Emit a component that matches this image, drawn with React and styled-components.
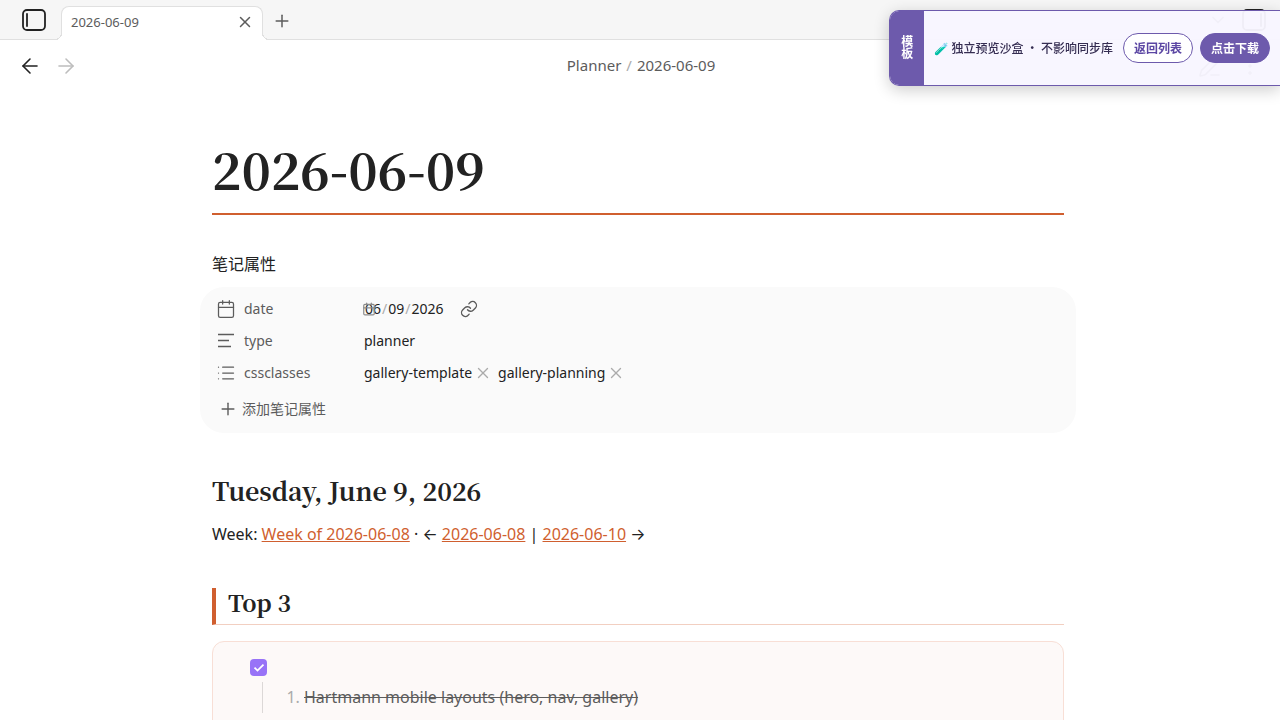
import { useState } from 'react';
import styled, { createGlobalStyle } from 'styled-components';
import { ArrowLeft, ArrowRight, Calendar, ChevronDown, Link, List, MoreVertical, PenLine, Plus, X } from 'lucide-react';

const sans = `'Noto Sans', Inter, 'Noto Sans CJK SC', sans-serif`;
const serif = `'Noto Serif CJK SC', 'Noto Serif', 'Liberation Serif', serif`;

const GlobalStyle = createGlobalStyle`
  * {
    box-sizing: border-box;
  }

  body {
    margin: 0;
    background: #ffffff;
    color: #222222;
    font-family: ${sans};
    font-size: 16px;
    line-height: 24px;
  }

  button {
    border: none;
    padding: 0;
    background: none;
    font-family: inherit;
    color: inherit;
    cursor: pointer;
  }
`;

const Workspace = styled.div`
  display: flex;
  flex-direction: column;
  height: 100vh;
  overflow: hidden;
`;

const TabBar = styled.header`
  display: flex;
  align-items: flex-end;
  height: 40px;
  padding: 0 14px 0 22px;
  background: #f6f6f6;
  box-shadow: inset 0 -1px 0 #e0e0e0;
`;

const IconButton = styled.button`
  display: flex;
  align-items: center;
  justify-content: center;
  flex-shrink: 0;
  color: ${props => props.$color || '#5c5c5c'};
`;

const SidebarButton = styled(IconButton)`
  height: 40px;
`;

const Tab = styled.div`
  position: relative;
  display: flex;
  align-items: center;
  justify-content: space-between;
  width: 202px;
  height: 34px;
  margin-left: 15px;
  padding: 0 8px 3px 9px;
  border: 1px solid #e0e0e0;
  border-bottom: none;
  border-radius: 8px 8px 0 0;
  background: #ffffff;
  color: #5c5c5c;
  font-size: 13px;

  /* curved feet that join the tab to the bar's bottom line */
  &::before,
  &::after {
    content: '';
    position: absolute;
    bottom: 0;
    width: 7px;
    height: 7px;
  }

  &::before {
    left: -7px;
    background: radial-gradient(circle at 0 0, #f6f6f6 6px, #e0e0e0 6px, #e0e0e0 7px, #ffffff 7px);
  }

  &::after {
    right: -7px;
    background: radial-gradient(circle at 100% 0, #f6f6f6 6px, #e0e0e0 6px, #e0e0e0 7px, #ffffff 7px);
  }
`;

const NewTabButton = styled(IconButton)`
  height: 38px;
  margin-left: 9px;
`;

const TabBarEnd = styled.div`
  display: flex;
  align-items: center;
  gap: 14px;
  height: 40px;
  margin-left: auto;
`;

const ViewHeader = styled.div`
  display: grid;
  grid-template-columns: 1fr auto 1fr;
  align-items: center;
  flex-shrink: 0;
  height: 52px;
  padding: 0 18px;
`;

const HeaderGroup = styled.div`
  display: flex;
  align-items: center;
  justify-content: ${props => (props.$end ? 'flex-end' : 'flex-start')};
  gap: ${props => (props.$end ? '16px' : '12px')};
`;

const Breadcrumb = styled.nav`
  display: flex;
  gap: 5px;
  padding: 0 0 2px 2px;
  color: #5c5c5c;
  font-size: 15px;

  a {
    color: inherit;
    text-decoration: none;
  }

  span {
    color: #ababab;
  }
`;

const Scroller = styled.main`
  flex: 1;
  min-height: 0;
  padding: 36px 28px 0 24px;
  overflow: hidden;
`;

const Note = styled.article`
  max-width: 852px;
  margin: 0 auto;
`;

const Title = styled.h1`
  margin: 0;
  padding: 6px 0 10px;
  border-bottom: 2px solid #d05f2f;
  font-family: ${serif};
  font-size: 50px;
  font-weight: 700;
  line-height: 69px;
`;

const PropertiesHeading = styled.h2`
  margin: 37px 0 11px;
  font-size: 16px;
  font-weight: 400;
  line-height: 24px;
`;

const Properties = styled.section`
  margin: 0 -12px;
  padding: 6px 16px 8px;
  border-radius: 24px;
  background: #fafafa;
  font-size: 14px;
`;

const Property = styled.div`
  display: flex;
  align-items: center;
  height: 32px;
`;

const PropertyName = styled.label`
  display: flex;
  align-items: center;
  gap: 8px;
  width: 148px;
  color: #5c5c5c;
`;

const DateField = styled.div`
  position: relative;
  display: flex;
  align-items: center;
  gap: 12px;

  > svg {
    position: absolute;
    left: -2px;
    color: #8a8a8a;
  }
`;

const DateInput = styled.input`
  width: 84px;
  height: 20px;
  padding: 0;
  border: none;
  background: none;
  color: #222222;
  font-family: inherit;
  font-size: 14px;
  line-height: 18px;

  &::-webkit-datetime-edit-fields-wrapper,
  &::-webkit-datetime-edit {
    padding: 0;
  }

  &::-webkit-datetime-edit-text {
    padding: 0;
    color: #ababab;
  }

  &::-webkit-calendar-picker-indicator {
    display: none;
  }
`;

const TextInput = styled.input`
  flex: 1;
  height: 24px;
  padding: 0 0 2px;
  border: none;
  background: none;
  color: #222222;
  font-family: inherit;
  font-size: 14px;
`;

const Pills = styled.div`
  display: flex;
  gap: 6px;
`;

const Pill = styled.span`
  display: flex;
  align-items: center;
  gap: 2px;
`;

const AddProperty = styled.button`
  display: flex;
  align-items: center;
  gap: 4px;
  height: 32px;
  margin-top: 4px;
  padding: 0 2px;
  color: #5c5c5c;
  font-size: 14px;
  line-height: 20px;
`;

const DateHeading = styled.h2`
  margin: 37px 0 12px;
  font-family: ${serif};
  font-size: 25px;
  font-weight: 700;
  line-height: 40px;
`;

const Paragraph = styled.p`
  margin: 0;
`;

const NoteLink = styled.a`
  color: #d05f2f;
  text-decoration: underline;
`;

const SectionHeading = styled.h3`
  margin: 42px 0 16px;
  padding: 0 0 6px 12px;
  border-bottom: 1px solid #f2cfc1;
  border-left: 4px solid #d05f2f;
  font-family: ${serif};
  font-size: 23px;
  font-weight: 700;
  line-height: 30px;
`;

const TaskCard = styled.div`
  min-height: 160px;
  padding: 17px 37px;
  border: 1px solid #f8dfd6;
  border-radius: 12px;
  background: #fdf9f8;
`;

const Checkbox = styled.input`
  display: block;
  appearance: none;
  width: 17px;
  height: 17px;
  margin: 0;
  border-radius: 4px;
  background: #9873f7;
`;

const CheckWrap = styled.span`
  display: block;
  position: relative;
  width: 17px;

  svg {
    position: absolute;
    inset: 0;
    pointer-events: none;
  }
`;

const TaskList = styled.ol`
  margin: 6px 0 0 12px;
  padding: 3px 0 4px 41px;
  border-left: 1px solid #dcd8d7;
  color: #5c5c5c;

  li::marker {
    color: #ababab;
  }
`;

const Banner = styled.aside`
  position: fixed;
  top: 10px;
  right: 0;
  display: flex;
  height: 76px;
  border: 1px solid #6d5aac;
  border-right: none;
  border-radius: 10px 0 0 10px;
  overflow: hidden;
  background: rgba(248, 246, 255, 0.96);
  box-shadow: 0 4px 16px rgba(0, 0, 0, 0.2);
  font-family: 'Noto Sans CJK SC', sans-serif;
  font-size: 12px;
`;

const BannerTag = styled.div`
  display: flex;
  align-items: center;
  justify-content: center;
  width: 34px;
  padding-bottom: 2px;
  background: #6d5aac;
  color: #ffffff;
  font-weight: 700;
  line-height: 34px;
  writing-mode: vertical-rl;
`;

const BannerBody = styled.div`
  display: flex;
  align-items: center;
  gap: 7px;
  padding: 0 10px;
  color: #352d52;
`;

const BannerText = styled.span`
  margin-right: 3px;
  font-weight: 500;
`;

const BannerButton = styled.button`
  && {
    height: 30px;
    padding: 0 10px 2px;
    border: 1px solid #6d5aac;
    border-radius: 15px;
    background: ${props => (props.$primary ? '#6d5aac' : '#ffffff')};
    color: ${props => (props.$primary ? '#ffffff' : '#5b46a3')};
    font-size: 12px;
    font-weight: 700;
  }
`;

const SidebarIcon = ({ flipped }) => (
  <svg width="24" height="22" viewBox="0 0 24 22" fill="none" stroke="currentColor" strokeWidth="1.8" strokeLinecap="round">
    <rect x="1" y="1" width="22" height="20" rx="4" />
    <path d={flipped ? 'M19 5v12' : 'M5 5v12'} />
  </svg>
);

const TextIcon = () => (
  <svg width="20" height="20" viewBox="0 0 20 20" fill="none" stroke="currentColor" strokeWidth="1.3">
    <path d="M2 3.5h16M2 9.5h11M2 15.5h13" />
  </svg>
);

const classes = ['gallery-template', 'gallery-planning'];

const App = () => {
  const [date, setDate] = useState('2026-06-09');
  const [type, setType] = useState('planner');
  const [done, setDone] = useState(true);

  return (
    <Workspace>
      <GlobalStyle />
      <TabBar>
        <SidebarButton $color="#222222" aria-label="Toggle left sidebar">
          <SidebarIcon />
        </SidebarButton>
        <Tab>
          <span>2026-06-09</span>
          <IconButton aria-label="Close tab">
            <X size={18} strokeWidth={2} />
          </IconButton>
        </Tab>
        <NewTabButton aria-label="New tab">
          <Plus size={20} strokeWidth={1.8} />
        </NewTabButton>
        <TabBarEnd>
          <IconButton aria-label="Tab list">
            <ChevronDown size={20} />
          </IconButton>
          <IconButton $color="#222222" aria-label="Toggle right sidebar">
            <SidebarIcon flipped />
          </IconButton>
        </TabBarEnd>
      </TabBar>

      <ViewHeader>
        <HeaderGroup>
          <IconButton $color="#222222" aria-label="Back">
            <ArrowLeft size={24} strokeWidth={1.6} />
          </IconButton>
          <IconButton $color="#bdbdbd" aria-label="Forward">
            <ArrowRight size={24} strokeWidth={1.6} />
          </IconButton>
        </HeaderGroup>
        <Breadcrumb>
          <a href="#planner">Planner</a>
          <span>/</span>
          <a href="#note">2026-06-09</a>
        </Breadcrumb>
        <HeaderGroup $end>
          <IconButton aria-label="Edit">
            <PenLine size={24} strokeWidth={1.6} />
          </IconButton>
          <IconButton aria-label="More options">
            <MoreVertical size={24} strokeWidth={1.6} />
          </IconButton>
        </HeaderGroup>
      </ViewHeader>

      <Scroller>
        <Note>
          <Title>2026-06-09</Title>

          <PropertiesHeading>笔记属性</PropertiesHeading>
          <Properties>
            <Property>
              <PropertyName htmlFor="date">
                <Calendar size={20} strokeWidth={1.5} />
                date
              </PropertyName>
              <DateField>
                <Calendar size={14} strokeWidth={2} />
                <DateInput id="date" type="date" value={date} onChange={(e) => setDate(e.target.value)} />
                <IconButton aria-label="Open daily note">
                  <Link size={18} strokeWidth={1.8} />
                </IconButton>
              </DateField>
            </Property>
            <Property>
              <PropertyName htmlFor="type">
                <TextIcon />
                type
              </PropertyName>
              <TextInput id="type" value={type} onChange={(e) => setType(e.target.value)} />
            </Property>
            <Property>
              <PropertyName as="div">
                <List size={20} strokeWidth={1.5} />
                cssclasses
              </PropertyName>
              <Pills>
                {classes.map(name => (
                  <Pill key={name}>
                    {name}
                    <IconButton $color="#ababab" aria-label={`Remove ${name}`}>
                      <X size={18} strokeWidth={1.8} />
                    </IconButton>
                  </Pill>
                ))}
              </Pills>
            </Property>
            <AddProperty>
              <Plus size={20} strokeWidth={1.7} />
              添加笔记属性
            </AddProperty>
          </Properties>

          <DateHeading>Tuesday, June 9, 2026</DateHeading>
          <Paragraph>
            Week: <NoteLink href="#week">Week of 2026-06-08</NoteLink> · ←{' '}
            <NoteLink href="#previous">2026-06-08</NoteLink> | <NoteLink href="#next">2026-06-10</NoteLink> →
          </Paragraph>

          <SectionHeading>Top 3</SectionHeading>
          <TaskCard>
            <CheckWrap>
              <Checkbox
                type="checkbox"
                aria-label="Hartmann mobile layouts"
                checked={done}
                onChange={(e) => setDone(e.target.checked)}
              />
              {done && (
                <svg width="17" height="17" viewBox="0 0 17 17" fill="none" stroke="#ffffff" strokeWidth="1.8">
                  <path d="M4.5 8.6l3 3 6-6" />
                </svg>
              )}
            </CheckWrap>
            <TaskList>
              <li>
                <s>Hartmann mobile layouts (hero, nav, gallery)</s>
              </li>
            </TaskList>
          </TaskCard>
        </Note>
      </Scroller>

      <Banner>
        <BannerTag>模板</BannerTag>
        <BannerBody>
          <BannerText>🧪 独立预览沙盒 ・ 不影响同步库</BannerText>
          <BannerButton>返回列表</BannerButton>
          <BannerButton $primary>点击下载</BannerButton>
        </BannerBody>
      </Banner>
    </Workspace>
  );
};

export default App;
